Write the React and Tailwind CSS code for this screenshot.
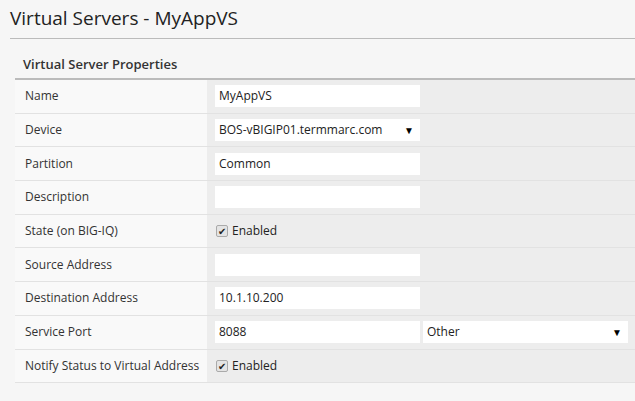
const rows = [
  { label: 'Name', kind: 'input', value: 'MyAppVS' },
  { label: 'Device', kind: 'select', value: 'BOS-vBIGIP01.termmarc.com' },
  { label: 'Partition', kind: 'input', value: 'Common' },
  { label: 'Description', kind: 'input', value: '' },
  { label: 'State (on BIG-IQ)', kind: 'check' },
  { label: 'Source Address', kind: 'input', value: '' },
  { label: 'Destination Address', kind: 'input', value: '10.1.10.200' },
  { label: 'Service Port', kind: 'port', value: '8088' },
  { label: 'Notify Status to Virtual Address', kind: 'check' },
];

function Box({ children, select }) {
  return (
    <div className="w-[205px] h-[22px] bg-white flex items-center justify-between pl-[4px] pr-[6px] text-[#222]">
      <span>{children}</span>
      {select && <span className="text-[10px] text-black">▼</span>}
    </div>
  );
}

function Check() {
  return (
    <div className="flex items-center gap-[4px] pl-px">
      <span className="w-[12px] h-[12px] rounded-[2px] border border-[#aaa] bg-[#e4e4e4] flex items-center justify-center text-[10px] leading-none text-[#222]">✔</span>
      <span className="text-[#222]">Enabled</span>
    </div>
  );
}

export default function App() {
  return (
    <div className="w-[635px] h-[401px] bg-[#f6f6f6] overflow-hidden text-[12px]" style={{ fontFamily: '"Open Sans", "Liberation Sans", sans-serif' }}>
      <div className="ml-[10px] pt-[3px] h-[39px] border-b border-[#bbb]">
        <h1 className="text-[19px] text-[#222] leading-[30px]">Virtual Servers - MyAppVS</h1>
      </div>
      <div className="ml-[15px]">
        <div className="h-[41px] border-b-2 border-[#bbb] pl-[8px] pt-[16px] text-[13px] font-semibold text-[#333] leading-[18px]">
          Virtual Server Properties
        </div>
        {rows.map((r) => (
          <div key={r.label} className="flex h-[33.7px] border-b border-[#e2e2e2] text-[#333]">
            <div className="w-[192px] bg-[#f9f9f9] pl-[10px] flex items-center">{r.label}</div>
            <div className="flex-1 bg-[#ededed] pl-[8px] flex items-center gap-[3px]">
              {r.kind === 'input' && <Box>{r.value}</Box>}
              {r.kind === 'select' && <Box select>{r.value}</Box>}
              {r.kind === 'check' && <Check />}
              {r.kind === 'port' && (
                <>
                  <Box>{r.value}</Box>
                  <Box select>Other</Box>
                </>
              )}
            </div>
          </div>
        ))}
      </div>
    </div>
  );
}
